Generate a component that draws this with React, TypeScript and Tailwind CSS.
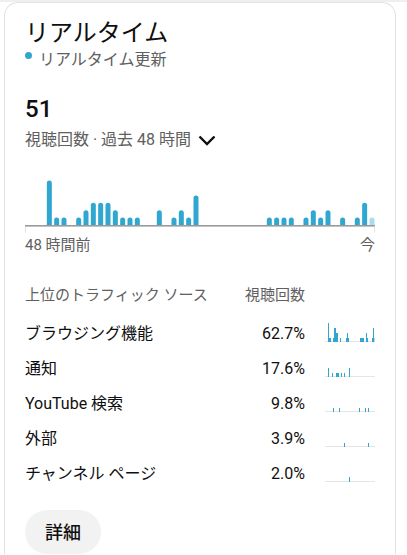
import React from "react";

const BLUE = "#30a7d0";
const LIGHT = "#a9dcee";

// 48 one-hour buckets, value = views
const hourly: Record<number, number> = {
  3: 6, 4: 1, 5: 1, 7: 1, 8: 2, 9: 3, 10: 3, 11: 3, 12: 2, 13: 1, 14: 1, 15: 1,
  18: 2, 20: 1, 21: 2, 22: 1, 23: 4,
  33: 1, 34: 1, 35: 1, 36: 1, 38: 1, 39: 2, 40: 1, 41: 2, 43: 1, 45: 1, 46: 3, 47: 1,
};

type Bar = [number, number, boolean?];

const rows: { name: string; pct: string; bars: Bar[] }[] = [
  {
    name: "ブラウジング機能",
    pct: "62.7%",
    bars: [
      [3, 19], [4, 4], [5, 4], [8, 4], [9, 14], [10, 14], [11, 9], [12, 9], [15, 4],
      [21, 4], [22, 9], [23, 4], [35, 4], [36, 4], [37, 4], [38, 4], [41, 9], [42, 4],
      [47, 4], [48, 14], [49, 4, true],
    ],
  },
  {
    name: "通知",
    pct: "17.6%",
    bars: [[3, 9], [7, 4], [11, 4], [12, 4], [13, 4], [16, 4], [19, 4], [24, 9]],
  },
  { name: "YouTube 検索", pct: "9.8%", bars: [[8, 4], [14, 4], [34, 4], [40, 4], [43, 4]] },
  { name: "外部", pct: "3.9%", bars: [[19, 4], [43, 4]] },
  { name: "チャンネル ページ", pct: "2.0%", bars: [[24, 5]] },
];

function MainChart() {
  const base = 55;
  return (
    <svg width="350" height="64" className="mt-[20px] block">
      {Array.from({ length: 48 }, (_, i) => {
        const v = hourly[i];
        if (!v) return null;
        const h = v * 7.4;
        const cx = 2.33 + i * 7.333;
        const x = cx - 2.5;
        const y = base - h;
        return (
          <path
            key={i}
            d={`M${x} ${base} L${x} ${y + 2.5} A2.5 2.5 0 0 1 ${x + 5} ${y + 2.5} L${x + 5} ${base} Z`}
            fill={i === 47 ? LIGHT : BLUE}
          />
        );
      })}
      <rect x="0" y={base} width="350" height="1.6" fill="#9a9a9a" />
      <rect x="0" y={base + 1.6} width="1" height="6" fill="#e3e3e3" />
      <rect x="349" y={base + 1.6} width="1" height="6" fill="#e3e3e3" />
    </svg>
  );
}

function Spark({ bars }: { bars: Bar[] }) {
  return (
    <svg width="50" height="16" className="ml-[20px] block shrink-0 overflow-visible" shapeRendering="crispEdges">
      <rect x="0" y="15" width="50" height="1" fill="#e5e5e5" />
      {bars.map(([x, h, light], i) => (
        <rect key={i} x={x} y={16 - h} width="1" height={h} fill={light ? LIGHT : BLUE} />
      ))}
    </svg>
  );
}

export default function App() {
  return (
    <div
      className="h-[555px] w-[407px] overflow-hidden bg-white"
      style={{ fontFamily: 'Roboto, "Noto Sans CJK JP", sans-serif' }}
    >
      <div className="h-[2px] bg-[#efefef]" />
      <div className="ml-[4px] w-[392px] rounded-t-[14px] border border-b-0 border-[#e3e3e3] pl-[20px] pr-[20px] pt-[14px]">
        <h2 className="text-[24px] leading-8 text-[#0f0f0f]">リアルタイム</h2>
        <div className="mt-[1px] flex items-start gap-[7px]">
          <span className="mt-[2px] h-[7px] w-[7px] rounded-full bg-[#30a7d0]" />
          <span className="text-[16px] leading-5 text-[#606060]">リアルタイム更新</span>
        </div>

        <div className="mt-[23px] text-[24px] font-medium leading-8 text-[#0f0f0f]">51</div>
        <div className="mt-[5px] flex items-center gap-[7px]">
          <span className="text-[16px] leading-5 text-[#606060]">視聴回数 · 過去 48 時間</span>
          <svg width="18" height="11" viewBox="0 0 18 11" className="mt-[1px]">
            <path d="M1.5 1.5 L9 9 L16.5 1.5" fill="none" stroke="#0f0f0f" strokeWidth="2.4" />
          </svg>
        </div>

        <MainChart />
        <div className="mt-[1px] flex justify-between text-[15px] leading-5 text-[#606060]">
          <span>48 時間前</span>
          <span>今</span>
        </div>

        <div className="mt-[30px] flex text-[15px] leading-5 text-[#606060]">
          <span className="flex-1">上位のトラフィック ソース</span>
          <span>視聴回数</span>
          <span className="w-[70px]" />
        </div>

        <div className="mt-[11px]">
          {rows.map((r) => (
            <div key={r.name} className="flex h-[35px] items-center text-[16px] text-[#0f0f0f]">
              <span className="flex-1">{r.name}</span>
              <span>{r.pct}</span>
              <Spark bars={r.bars} />
            </div>
          ))}
        </div>

        <button
          type="button"
          className="mt-[19px] h-[44px] rounded-full bg-[#f2f2f2] px-[20px] text-[18px] font-medium text-[#0f0f0f]"
        >
          詳細
        </button>
      </div>
    </div>
  );
}
